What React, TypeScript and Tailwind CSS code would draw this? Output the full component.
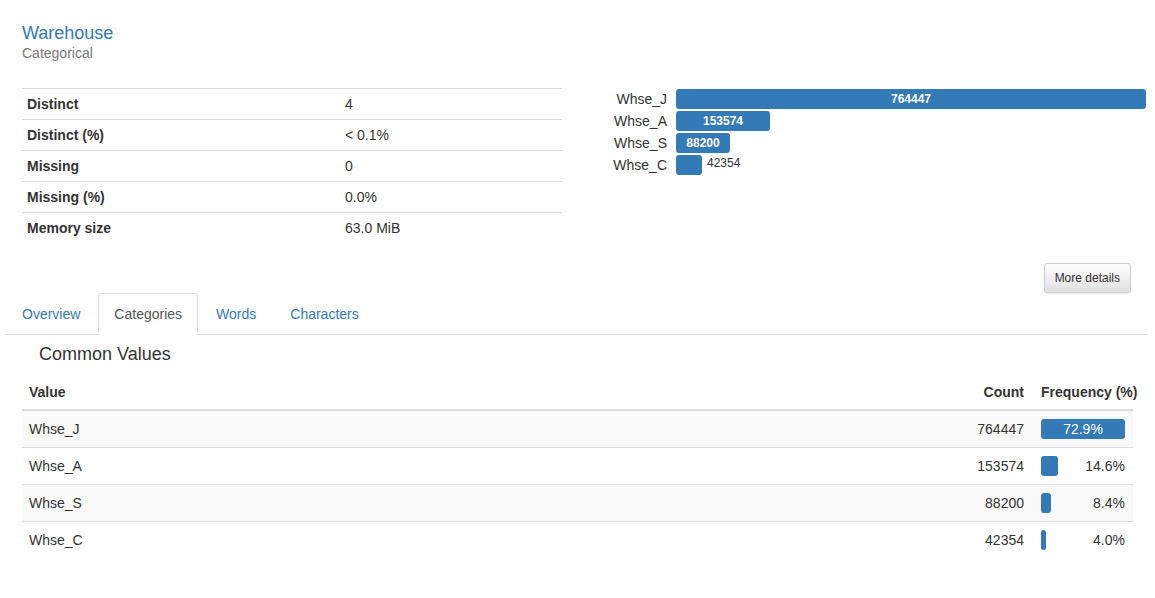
import React from 'react';

const stats = [
  { label: 'Distinct', value: '4' },
  { label: 'Distinct (%)', value: '< 0.1%' },
  { label: 'Missing', value: '0' },
  { label: 'Missing (%)', value: '0.0%' },
  { label: 'Memory size', value: '63.0 MiB' },
];

const values = [
  { name: 'Whse_J', count: 764447, pct: 72.9 },
  { name: 'Whse_A', count: 153574, pct: 14.6 },
  { name: 'Whse_S', count: 88200, pct: 8.4 },
  { name: 'Whse_C', count: 42354, pct: 4.0 },
];

const tabs = ['Overview', 'Categories', 'Words', 'Characters'];

function MiniChart() {
  const max = values[0].count;
  return (
    <div className="ml-[38px] mt-[1px] flex w-[546px] shrink-0 flex-col gap-[2px]">
      {values.map((v) => {
        const w = Math.round((v.count / max) * 470);
        const inside = w > 45;
        return (
          <div key={v.name} className="flex h-[20px] items-center">
            <div className="w-[67px] text-right text-[14px] leading-[20px]">{v.name}</div>
            <div className="ml-[9px] flex h-[20px] w-[470px]">
              <div
                className="flex h-[20px] items-center justify-center rounded-[3px] bg-[#337ab7] text-[12px] font-bold text-white"
                style={{ width: w }}
              >
                {inside ? v.count : ''}
              </div>
              {!inside && <span className="ml-[5px] self-start text-[12px] leading-[16px]">{v.count}</span>}
            </div>
          </div>
        );
      })}
    </div>
  );
}

function App() {
  return (
    <div className="min-h-screen bg-white pl-[6px] pr-[7px] font-['Liberation_Sans',Arial,sans-serif] text-[14px] leading-[20px] text-[#333]">
      {/* Header + summary */}
      <div className="pl-[16px] pr-[17px] pt-[23px]">
        <div className="text-[18px] leading-[20px] text-[#337ab7]">Warehouse</div>
        <div className="text-[#777]">Categorical</div>

        <div className="mt-[25px] flex">
          <div className="w-[540px] shrink-0">
            {stats.map((s) => (
              <div key={s.label} className="grid grid-cols-[318px_1fr] border-t border-[#ddd]">
                <div className="p-[5px] font-bold">{s.label}</div>
                <div className="p-[5px]">{s.value}</div>
              </div>
            ))}
          </div>
          <MiniChart />
        </div>

        <div className="mt-[20px] flex justify-end">
          <button className="rounded-[3px] border border-[#ccc] bg-linear-to-b from-white to-[#e0e0e0] px-[10px] py-[5px] text-[12px] leading-[18px] text-[#333] shadow-[inset_0_1px_0_rgba(255,255,255,0.15),0_1px_1px_rgba(0,0,0,0.075)]">
            More details
          </button>
        </div>
      </div>

      {/* Tabs */}
      <ul className="flex border-b border-[#ddd]">
        {tabs.map((t) => (
          <li key={t} className="-mb-px mr-[2px]">
            <a
              className={
                t === 'Categories'
                  ? 'block rounded-t-[4px] border border-[#ddd] border-b-transparent bg-white px-[15px] py-[10px] text-[#555]'
                  : 'block rounded-t-[4px] border border-transparent px-[15px] py-[10px] text-[#337ab7]'
              }
            >
              {t}
            </a>
          </li>
        ))}
      </ul>

      {/* Tab content */}
      <div className="pl-[16px] pr-[15px]">
        <h4 className="mt-[9px] mb-[9px] pl-[17px] text-[18px] leading-[20px]">Common Values</h4>
        <div className="grid grid-cols-[1fr_120px_101px] border-b-2 border-[#ddd] font-bold">
          <div className="pl-[7px] pr-[8px] pt-[9px] pb-[7px]">Value</div>
          <div className="px-[8px] pt-[9px] pb-[7px] text-right">Count</div>
          <div className="whitespace-nowrap pl-[9px] pt-[9px] pb-[7px]">Frequency (%)</div>
        </div>
        {values.map((v, i) => {
          const w = (v.pct / 72.9) * 84;
          return (
            <div
              key={v.name}
              className={`grid grid-cols-[1fr_120px_101px] ${i > 0 ? 'border-t border-[#ddd]' : ''} ${i % 2 === 0 ? 'bg-[#f9f9f9]' : ''}`}
            >
              <div className="py-[8px] pl-[7px] pr-[8px]">{v.name}</div>
              <div className="p-[8px] text-right">{v.count}</div>
              <div className="py-[8px] pl-[9px] pr-[8px]">
                <div className="flex h-[20px] w-[84px] items-center">
                  {i === 0 ? (
                    <div className="flex h-[20px] w-[84px] items-center justify-center rounded-[3px] bg-[#337ab7] text-white">
                      {v.pct.toFixed(1)}%
                    </div>
                  ) : (
                    <>
                      <div className="h-[20px] rounded-[3px] bg-[#337ab7]" style={{ width: w }} />
                      <div className="flex-1 text-right">{v.pct.toFixed(1)}%</div>
                    </>
                  )}
                </div>
              </div>
            </div>
          );
        })}
      </div>
    </div>
  );
}

export default App;
